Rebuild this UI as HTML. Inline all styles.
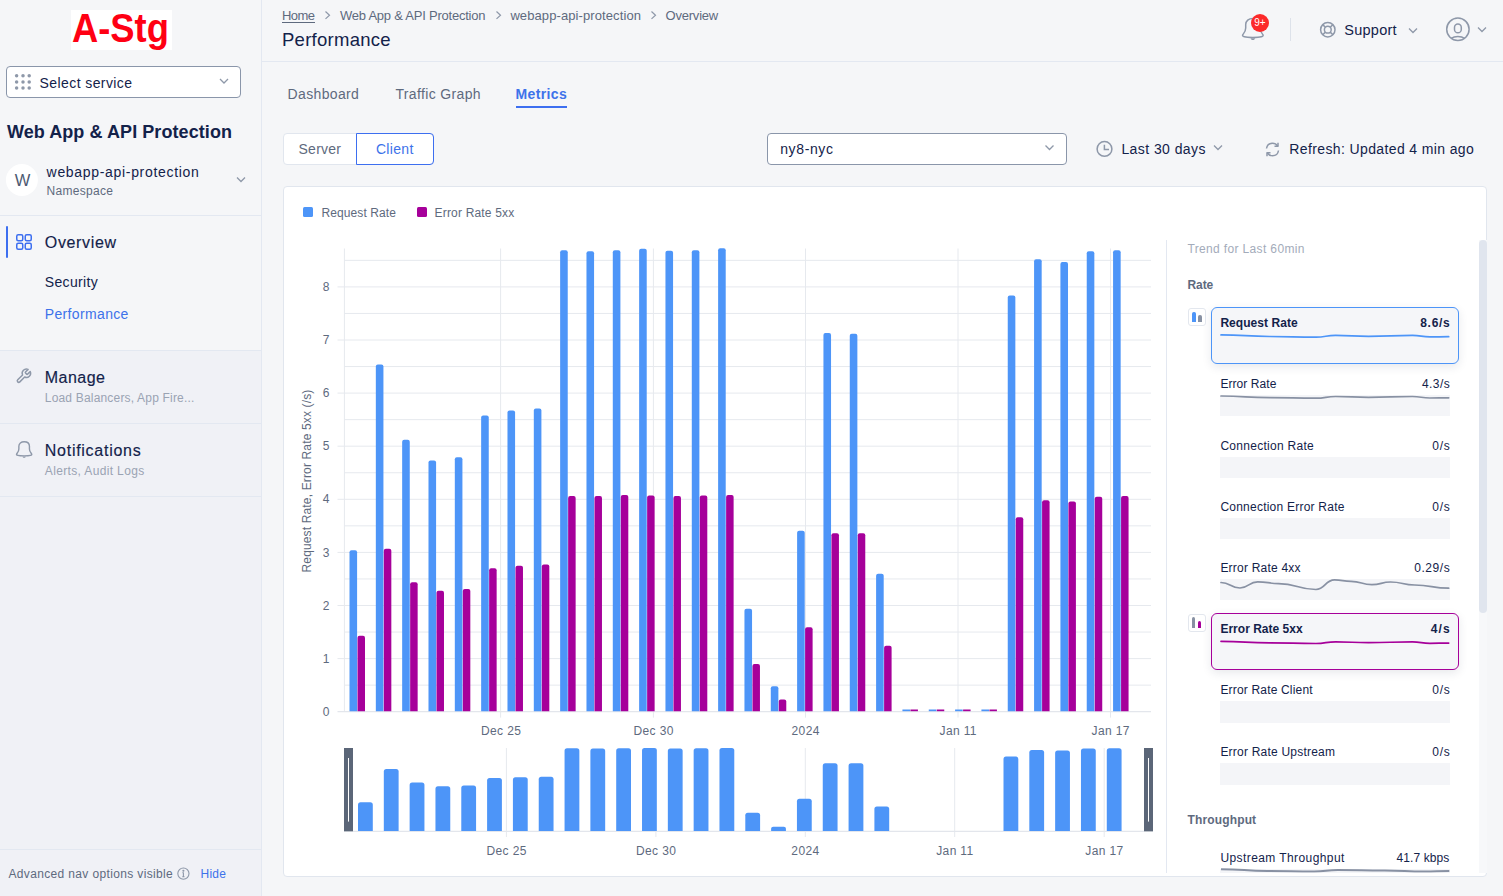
<!DOCTYPE html>
<html><head><meta charset="utf-8"><style>
html,body{margin:0;padding:0;width:1503px;height:896px;overflow:hidden;background:#f5f6f8;font-family:"Liberation Sans", sans-serif;}
.t{position:absolute;white-space:nowrap;}
svg{display:block;}
</style></head><body>
<div style="position:absolute;left:0px;top:0px;width:261px;height:896px;background:#f5f6f8;"></div>
<div style="position:absolute;left:0px;top:351px;width:261px;height:545px;background:#f0f1f6;"></div>
<div style="position:absolute;left:261px;top:0px;width:1px;height:896px;background:#e3e8f1;"></div>
<div style="position:absolute;left:262px;top:0px;width:1241px;height:896px;background:#f5f6f8;"></div>
<div style="position:absolute;left:262px;top:61px;width:1241px;height:1px;background:#e3e8f1;"></div>
<div style="position:absolute;left:70.6px;top:10px;width:101.4px;height:40px;background:#fff;"></div>
<div class="t" style="left:71.70px;top:8.13px;font-size:40px;line-height:40px;color:#ff0013;font-weight:bold;transform:scaleX(0.9087);transform-origin:0 0;">A-Stg</div>
<div style="position:absolute;left:6px;top:66px;width:235px;height:32px;background:#fff;border:1px solid #8a96aa;border-radius:4px;box-sizing:border-box;"></div>
<svg style="position:absolute;left:0;top:0" width="261" height="120"><circle cx="16.6" cy="75.8" r="1.75" fill="#8e98a9"/><circle cx="16.6" cy="82" r="1.75" fill="#8e98a9"/><circle cx="16.6" cy="88.1" r="1.75" fill="#8e98a9"/><circle cx="23" cy="75.8" r="1.75" fill="#8e98a9"/><circle cx="23" cy="82" r="1.75" fill="#8e98a9"/><circle cx="23" cy="88.1" r="1.75" fill="#8e98a9"/><circle cx="29.2" cy="75.8" r="1.75" fill="#8e98a9"/><circle cx="29.2" cy="82" r="1.75" fill="#8e98a9"/><circle cx="29.2" cy="88.1" r="1.75" fill="#8e98a9"/><path d="M220 79 L224 83 L228 79" fill="none" stroke="#8e98a9" stroke-width="1.3"/></svg>
<div class="t" style="left:39.60px;top:75.65px;font-size:14px;line-height:14px;color:#13224a;letter-spacing:0.405px;">Select service</div>
<div class="t" style="left:6.90px;top:123.46px;font-size:18px;line-height:18px;color:#13224a;font-weight:bold;letter-spacing:0.076px;">Web App &amp; API Protection</div>
<svg style="position:absolute;left:0;top:160" width="261" height="40"><circle cx="21.9" cy="20" r="16" fill="#fff"/><path d="M237 17.5 L241 21.5 L245 17.5" fill="none" stroke="#8e98a9" stroke-width="1.3"/></svg>
<div class="t" style="left:14.80px;top:172.03px;font-size:16.5px;line-height:16.5px;color:#4d5a72;">W</div>
<div class="t" style="left:46.60px;top:165.35px;font-size:14px;line-height:14px;color:#13224a;letter-spacing:0.682px;">webapp-api-protection</div>
<div class="t" style="left:46.60px;top:185.04px;font-size:12px;line-height:12px;color:#5e6a7e;letter-spacing:0.296px;">Namespace</div>
<div style="position:absolute;left:0px;top:215px;width:261px;height:1px;background:#e3e8f1;"></div>
<div style="position:absolute;left:6px;top:225.5px;width:2px;height:32.3px;background:#3d6ff0;border-radius:1px;"></div>
<svg style="position:absolute;left:16;top:234px;left:16px" width="17" height="17" fill="none" stroke="#3d6ff0" stroke-width="1.5"><rect x="0.75" y="0.75" width="6" height="6" rx="1.5"/><rect x="9.25" y="0.75" width="6" height="6" rx="1.5"/><rect x="0.75" y="9.25" width="6" height="6" rx="1.5"/><rect x="9.25" y="9.25" width="6" height="6" rx="1.5"/></svg>
<div class="t" style="left:44.80px;top:234.95px;font-size:16px;line-height:16px;color:#13224a;letter-spacing:0.654px;-webkit-text-stroke:0.15px currentColor;">Overview</div>
<div class="t" style="left:44.80px;top:275.15px;font-size:14px;line-height:14px;color:#13224a;letter-spacing:0.332px;">Security</div>
<div class="t" style="left:44.80px;top:307.05px;font-size:14px;line-height:14px;color:#3d72ea;letter-spacing:0.346px;">Performance</div>
<div style="position:absolute;left:0px;top:350px;width:261px;height:1px;background:#e3e8f1;"></div>
<svg style="position:absolute;left:0px;top:0px" width="60" height="500" fill="none" stroke="#8e98a9" stroke-linejoin="round" stroke-linecap="round"><g transform="translate(15.2,367.6) scale(0.7)" stroke-width="2.1"><path d="M14.7 6.3a1 1 0 0 0 0 1.4l1.6 1.6a1 1 0 0 0 1.4 0l3.77-3.77a6 6 0 0 1-7.94 7.94l-6.91 6.91a2.12 2.12 0 0 1-3-3l6.91-6.91a6 6 0 0 1 7.94-7.94l-3.76 3.76z"/></g><g transform="translate(13.16,437.06) scale(0.74)" stroke-width="1.9"><path d="M4.8 22.6 C3.5 24.5 7 25.4 14.85 25.4 C22.7 25.4 26.2 24.5 24.9 22.6 C23.5 20.8 22 19.5 22 16 L22 12.5 C22 8.8 19 6.4 14.85 6.4 C10.7 6.4 7.7 8.8 7.7 12.5 L7.7 16 C7.7 19.5 6.2 20.8 4.8 22.6 Z"/><path d="M12.6 26.2 C12.8 27.4 13.6 28 14.85 28 C16.1 28 16.9 27.4 17.1 26.2 Z" fill="#8e98a9" stroke="none"/></g></svg>
<div class="t" style="left:44.80px;top:370.25px;font-size:16px;line-height:16px;color:#13224a;letter-spacing:0.454px;-webkit-text-stroke:0.15px currentColor;">Manage</div>
<div class="t" style="left:44.80px;top:391.64px;font-size:12px;line-height:12px;color:#9aa3b3;letter-spacing:0.183px;">Load Balancers, App Fire...</div>
<div style="position:absolute;left:0px;top:423px;width:261px;height:1px;background:#e3e8f1;"></div>
<div class="t" style="left:44.80px;top:442.95px;font-size:16px;line-height:16px;color:#13224a;letter-spacing:0.729px;-webkit-text-stroke:0.15px currentColor;">Notifications</div>
<div class="t" style="left:44.80px;top:464.64px;font-size:12px;line-height:12px;color:#9aa3b3;letter-spacing:0.353px;">Alerts, Audit Logs</div>
<div style="position:absolute;left:0px;top:496px;width:261px;height:1px;background:#e3e8f1;"></div>
<div style="position:absolute;left:0px;top:849px;width:261px;height:1px;background:#e3e8f1;"></div>
<div class="t" style="left:8.40px;top:867.64px;font-size:12px;line-height:12px;color:#5e6a7e;letter-spacing:0.357px;">Advanced nav options visible</div>
<svg style="position:absolute;left:176px;top:866px" width="15" height="15" fill="none" stroke="#8e98a9" stroke-width="1.1"><circle cx="7.4" cy="7.6" r="5.6"/><path d="M7.4 6.6 V10.6 M6.4 10.6 H8.4 M6.5 6.6 H7.4"/><circle cx="7.4" cy="4.7" r="0.5" fill="#8e98a9"/></svg>
<div class="t" style="left:200.60px;top:867.64px;font-size:12px;line-height:12px;color:#3d72ea;letter-spacing:0.204px;">Hide</div>
<div class="t" style="left:282.00px;top:8.99px;font-size:13px;line-height:13px;color:#5e6a7e;letter-spacing:-0.557px;">Home</div>
<div style="position:absolute;left:282px;top:21.6px;width:33px;height:1px;background:#5e6a7e;"></div>
<svg style="position:absolute;left:324px;top:10.2px" width="8" height="11" fill="none" stroke="#8e98a9" stroke-width="1.2"><path d="M1.5 1.5 L5.5 5.2 L1.5 8.9"/></svg>
<div class="t" style="left:339.90px;top:8.99px;font-size:13px;line-height:13px;color:#5e6a7e;letter-spacing:-0.226px;">Web App &amp; API Protection</div>
<svg style="position:absolute;left:494.7px;top:10.2px" width="8" height="11" fill="none" stroke="#8e98a9" stroke-width="1.2"><path d="M1.5 1.5 L5.5 5.2 L1.5 8.9"/></svg>
<div class="t" style="left:510.40px;top:8.99px;font-size:13px;line-height:13px;color:#5e6a7e;letter-spacing:0.096px;">webapp-api-protection</div>
<svg style="position:absolute;left:649.9px;top:10.2px" width="8" height="11" fill="none" stroke="#8e98a9" stroke-width="1.2"><path d="M1.5 1.5 L5.5 5.2 L1.5 8.9"/></svg>
<div class="t" style="left:665.50px;top:8.99px;font-size:13px;line-height:13px;color:#5e6a7e;letter-spacing:-0.203px;">Overview</div>
<div class="t" style="left:282.00px;top:30.64px;font-size:18.5px;line-height:18.5px;color:#13224a;letter-spacing:0.269px;">Performance</div>
<svg style="position:absolute;left:1238px;top:12px" width="30" height="32" fill="none" stroke="#8e98a9" stroke-width="1.5" stroke-linejoin="round"><path d="M4.8 22.6 C3.5 24.5 7 25.4 14.85 25.4 C22.7 25.4 26.2 24.5 24.9 22.6 C23.5 20.8 22 19.5 22 16 L22 12.5 C22 8.8 19 6.4 14.85 6.4 C10.7 6.4 7.7 8.8 7.7 12.5 L7.7 16 C7.7 19.5 6.2 20.8 4.8 22.6 Z"/><path d="M12.6 26.2 C12.8 27.4 13.6 28 14.85 28 C16.1 28 16.9 27.4 17.1 26.2 Z" fill="#8e98a9" stroke="none"/></svg>
<div style="position:absolute;left:1250.9px;top:13.9px;width:18px;height:18px;border-radius:9px;background:#fc2a2a;"></div>
<div class="t" style="left:1254.20px;top:17.53px;font-size:10px;line-height:10px;color:#ffffff;">9+</div>
<div style="position:absolute;left:1289.5px;top:18px;width:1px;height:23px;background:#dde2ea;"></div>
<svg style="position:absolute;left:1318px;top:20px" width="20" height="20" fill="none" stroke="#8e98a9" stroke-width="1.5"><circle cx="9.8" cy="9.7" r="7.2"/><circle cx="9.8" cy="9.7" r="3.4"/><path d="M4.7 4.6 L7.4 7.3 M14.9 4.6 L12.2 7.3 M4.7 14.8 L7.4 12.1 M14.9 14.8 L12.2 12.1"/></svg>
<div class="t" style="left:1344.20px;top:23.02px;font-size:14.5px;line-height:14.5px;color:#13224a;letter-spacing:0.270px;">Support</div>
<svg style="position:absolute;left:1407px;top:27px" width="12" height="8" fill="none" stroke="#8e98a9" stroke-width="1.3"><path d="M2 1.5 L6 5.5 L10 1.5"/></svg>
<svg style="position:absolute;left:1444px;top:15px" width="28" height="28" fill="none" stroke="#8e98a9" stroke-width="1.5"><circle cx="13.9" cy="14.3" r="11.2"/><rect x="10.5" y="9" width="6.8" height="8.8" rx="3.4"/><path d="M7.3 23.3 C9.3 21.7 11.4 21.4 13.9 21.4 C16.4 21.4 18.5 21.7 20.5 23.3"/></svg>
<svg style="position:absolute;left:1476px;top:26px" width="12" height="8" fill="none" stroke="#8e98a9" stroke-width="1.3"><path d="M2 1.5 L6 5.5 L10 1.5"/></svg>
<div class="t" style="left:287.60px;top:87.15px;font-size:14px;line-height:14px;color:#5e6a7e;letter-spacing:0.339px;">Dashboard</div>
<div class="t" style="left:395.40px;top:87.15px;font-size:14px;line-height:14px;color:#5e6a7e;letter-spacing:0.357px;">Traffic Graph</div>
<div class="t" style="left:515.50px;top:87.15px;font-size:14px;line-height:14px;color:#3d72ea;font-weight:bold;letter-spacing:0.381px;">Metrics</div>
<div style="position:absolute;left:515.5px;top:105.5px;width:51.3px;height:2px;background:#3d6ff0;"></div>
<div style="position:absolute;left:282.5px;top:133px;width:151px;height:32px;background:#fff;border:1px solid #e1e6ee;border-radius:4px;box-sizing:border-box;"></div>
<div style="position:absolute;left:356px;top:133px;width:77.5px;height:32px;border:1px solid #3d6ff0;border-radius:0 4px 4px 0;box-sizing:border-box;"></div>
<div class="t" style="left:298.50px;top:142.35px;font-size:14px;line-height:14px;color:#5e6a7e;letter-spacing:0.253px;">Server</div>
<div class="t" style="left:375.90px;top:142.35px;font-size:14px;line-height:14px;color:#3d72ea;letter-spacing:0.341px;">Client</div>
<div style="position:absolute;left:767px;top:133px;width:300px;height:32px;background:#fff;border:1px solid #8a96aa;border-radius:4px;box-sizing:border-box;"></div>
<div class="t" style="left:780.20px;top:141.85px;font-size:14px;line-height:14px;color:#13224a;letter-spacing:0.631px;">ny8-nyc</div>
<svg style="position:absolute;left:1043px;top:144px" width="13" height="8" fill="none" stroke="#8e98a9" stroke-width="1.3"><path d="M2.5 1.5 L6.5 5.5 L10.5 1.5"/></svg>
<svg style="position:absolute;left:1095px;top:140px" width="19" height="19" fill="none" stroke="#8e98a9" stroke-width="1.5"><circle cx="9.5" cy="8.9" r="7.4"/><path d="M9.4 4.8 V9.4 H14"/></svg>
<div class="t" style="left:1121.40px;top:141.85px;font-size:14px;line-height:14px;color:#13224a;letter-spacing:0.428px;">Last 30 days</div>
<svg style="position:absolute;left:1212px;top:144px" width="12" height="8" fill="none" stroke="#8e98a9" stroke-width="1.3"><path d="M2 1.5 L6 5.5 L10 1.5"/></svg>
<svg style="position:absolute;left:1263px;top:140px" width="19" height="19" fill="none" stroke="#8e98a9" stroke-width="1.5" stroke-linejoin="round"><path d="M3.5 8.5 C4 5.3 6.5 3.2 9.5 3.2 C11.7 3.2 13.5 4.3 14.6 6 M15.5 10.5 C15 13.7 12.5 15.8 9.5 15.8 C7.3 15.8 5.5 14.7 4.4 13"/><path d="M15 2.8 V6.3 H11.5 M4 16.2 V12.7 H7.5"/></svg>
<div class="t" style="left:1289.30px;top:141.85px;font-size:14px;line-height:14px;color:#13224a;letter-spacing:0.376px;">Refresh: Updated 4 min ago</div>
<div style="position:absolute;left:282.5px;top:185.5px;width:1204px;height:691.5px;background:#fff;border:1px solid #e1e6ee;border-radius:4px;box-sizing:border-box;"></div>
<div style="position:absolute;left:303px;top:207px;width:10px;height:10px;background:#4d95f8;border-radius:1.5px;"></div>
<div class="t" style="left:321.40px;top:206.74px;font-size:12px;line-height:12px;color:#5e6a7e;letter-spacing:0.111px;">Request Rate</div>
<div style="position:absolute;left:417px;top:207px;width:10px;height:10px;background:#a6009a;border-radius:1.5px;"></div>
<div class="t" style="left:434.60px;top:206.74px;font-size:12px;line-height:12px;color:#5e6a7e;letter-spacing:0.172px;">Error Rate 5xx</div>
<svg style="position:absolute;left:0;top:0" width="1503" height="896"><line x1="344.4" y1="685.15" x2="1151" y2="685.15" stroke="#e6e9ee" stroke-width="1"/><line x1="337.5" y1="658.60" x2="1151" y2="658.60" stroke="#e6e9ee" stroke-width="1"/><line x1="344.4" y1="632.05" x2="1151" y2="632.05" stroke="#e6e9ee" stroke-width="1"/><line x1="337.5" y1="605.50" x2="1151" y2="605.50" stroke="#e6e9ee" stroke-width="1"/><line x1="344.4" y1="578.95" x2="1151" y2="578.95" stroke="#e6e9ee" stroke-width="1"/><line x1="337.5" y1="552.40" x2="1151" y2="552.40" stroke="#e6e9ee" stroke-width="1"/><line x1="344.4" y1="525.85" x2="1151" y2="525.85" stroke="#e6e9ee" stroke-width="1"/><line x1="337.5" y1="499.30" x2="1151" y2="499.30" stroke="#e6e9ee" stroke-width="1"/><line x1="344.4" y1="472.75" x2="1151" y2="472.75" stroke="#e6e9ee" stroke-width="1"/><line x1="337.5" y1="446.20" x2="1151" y2="446.20" stroke="#e6e9ee" stroke-width="1"/><line x1="344.4" y1="419.65" x2="1151" y2="419.65" stroke="#e6e9ee" stroke-width="1"/><line x1="337.5" y1="393.10" x2="1151" y2="393.10" stroke="#e6e9ee" stroke-width="1"/><line x1="344.4" y1="366.55" x2="1151" y2="366.55" stroke="#e6e9ee" stroke-width="1"/><line x1="337.5" y1="340.00" x2="1151" y2="340.00" stroke="#e6e9ee" stroke-width="1"/><line x1="344.4" y1="313.45" x2="1151" y2="313.45" stroke="#e6e9ee" stroke-width="1"/><line x1="337.5" y1="286.90" x2="1151" y2="286.90" stroke="#e6e9ee" stroke-width="1"/><line x1="344.4" y1="260.35" x2="1151" y2="260.35" stroke="#e6e9ee" stroke-width="1"/><line x1="500.6" y1="248.5" x2="500.6" y2="717.6" stroke="#e6e9ee" stroke-width="1"/><line x1="653.4" y1="248.5" x2="653.4" y2="717.6" stroke="#e6e9ee" stroke-width="1"/><line x1="805.5" y1="248.5" x2="805.5" y2="717.6" stroke="#e6e9ee" stroke-width="1"/><line x1="958" y1="248.5" x2="958" y2="717.6" stroke="#e6e9ee" stroke-width="1"/><line x1="1110.5" y1="248.5" x2="1110.5" y2="717.6" stroke="#e6e9ee" stroke-width="1"/><line x1="344.4" y1="248.5" x2="344.4" y2="711.7" stroke="#e6e9ee" stroke-width="1"/><line x1="337.5" y1="711.7" x2="1151" y2="711.7" stroke="#e3e6ec" stroke-width="1.2"/><path d="M349.50 711.20 V552.28 Q349.50 550.28 351.50 550.28 H355.10 Q357.10 550.28 357.10 552.28 V711.20 Z" fill="#4d95f8"/><path d="M357.50 711.20 V637.77 Q357.50 635.77 359.50 635.77 H363.00 Q365.00 635.77 365.00 637.77 V711.20 Z" fill="#a6009a"/><path d="M375.83 711.20 V366.43 Q375.83 364.43 377.83 364.43 H381.43 Q383.43 364.43 383.43 366.43 V711.20 Z" fill="#4d95f8"/><path d="M383.83 711.20 V550.68 Q383.83 548.68 385.83 548.68 H389.33 Q391.33 548.68 391.33 550.68 V711.20 Z" fill="#a6009a"/><path d="M402.16 711.20 V441.83 Q402.16 439.83 404.16 439.83 H407.76 Q409.76 439.83 409.76 441.83 V711.20 Z" fill="#4d95f8"/><path d="M410.16 711.20 V584.14 Q410.16 582.14 412.16 582.14 H415.66 Q417.66 582.14 417.66 584.14 V711.20 Z" fill="#a6009a"/><path d="M428.49 711.20 V462.54 Q428.49 460.54 430.49 460.54 H434.09 Q436.09 460.54 436.09 462.54 V711.20 Z" fill="#4d95f8"/><path d="M436.49 711.20 V592.63 Q436.49 590.63 438.49 590.63 H441.99 Q443.99 590.63 443.99 592.63 V711.20 Z" fill="#a6009a"/><path d="M454.82 711.20 V459.35 Q454.82 457.35 456.82 457.35 H460.42 Q462.42 457.35 462.42 459.35 V711.20 Z" fill="#4d95f8"/><path d="M462.82 711.20 V591.04 Q462.82 589.04 464.82 589.04 H468.32 Q470.32 589.04 470.32 591.04 V711.20 Z" fill="#a6009a"/><path d="M481.15 711.20 V417.40 Q481.15 415.40 483.15 415.40 H486.75 Q488.75 415.40 488.75 417.40 V711.20 Z" fill="#4d95f8"/><path d="M489.15 711.20 V570.33 Q489.15 568.33 491.15 568.33 H494.65 Q496.65 568.33 496.65 570.33 V711.20 Z" fill="#a6009a"/><path d="M507.48 711.20 V412.62 Q507.48 410.62 509.48 410.62 H513.08 Q515.08 410.62 515.08 412.62 V711.20 Z" fill="#4d95f8"/><path d="M515.48 711.20 V567.68 Q515.48 565.68 517.48 565.68 H520.98 Q522.98 565.68 522.98 567.68 V711.20 Z" fill="#a6009a"/><path d="M533.81 711.20 V410.50 Q533.81 408.50 535.81 408.50 H539.41 Q541.41 408.50 541.41 410.50 V711.20 Z" fill="#4d95f8"/><path d="M541.81 711.20 V566.61 Q541.81 564.61 543.81 564.61 H547.31 Q549.31 564.61 549.31 566.61 V711.20 Z" fill="#a6009a"/><path d="M560.14 711.20 V252.26 Q560.14 250.26 562.14 250.26 H565.74 Q567.74 250.26 567.74 252.26 V711.20 Z" fill="#4d95f8"/><path d="M568.14 711.20 V498.11 Q568.14 496.11 570.14 496.11 H573.64 Q575.64 496.11 575.64 498.11 V711.20 Z" fill="#a6009a"/><path d="M586.47 711.20 V253.32 Q586.47 251.32 588.47 251.32 H592.07 Q594.07 251.32 594.07 253.32 V711.20 Z" fill="#4d95f8"/><path d="M594.47 711.20 V498.11 Q594.47 496.11 596.47 496.11 H599.97 Q601.97 496.11 601.97 498.11 V711.20 Z" fill="#a6009a"/><path d="M612.80 711.20 V252.26 Q612.80 250.26 614.80 250.26 H618.40 Q620.40 250.26 620.40 252.26 V711.20 Z" fill="#4d95f8"/><path d="M620.80 711.20 V497.05 Q620.80 495.05 622.80 495.05 H626.30 Q628.30 495.05 628.30 497.05 V711.20 Z" fill="#a6009a"/><path d="M639.13 711.20 V250.67 Q639.13 248.67 641.13 248.67 H644.73 Q646.73 248.67 646.73 250.67 V711.20 Z" fill="#4d95f8"/><path d="M647.13 711.20 V497.58 Q647.13 495.58 649.13 495.58 H652.63 Q654.63 495.58 654.63 497.58 V711.20 Z" fill="#a6009a"/><path d="M665.46 711.20 V252.79 Q665.46 250.79 667.46 250.79 H671.06 Q673.06 250.79 673.06 252.79 V711.20 Z" fill="#4d95f8"/><path d="M673.46 711.20 V498.11 Q673.46 496.11 675.46 496.11 H678.96 Q680.96 496.11 680.96 498.11 V711.20 Z" fill="#a6009a"/><path d="M691.79 711.20 V252.26 Q691.79 250.26 693.79 250.26 H697.39 Q699.39 250.26 699.39 252.26 V711.20 Z" fill="#4d95f8"/><path d="M699.79 711.20 V497.58 Q699.79 495.58 701.79 495.58 H705.29 Q707.29 495.58 707.29 497.58 V711.20 Z" fill="#a6009a"/><path d="M718.12 711.20 V250.14 Q718.12 248.14 720.12 248.14 H723.72 Q725.72 248.14 725.72 250.14 V711.20 Z" fill="#4d95f8"/><path d="M726.12 711.20 V497.05 Q726.12 495.05 728.12 495.05 H731.62 Q733.62 495.05 733.62 497.05 V711.20 Z" fill="#a6009a"/><path d="M744.45 711.20 V610.69 Q744.45 608.69 746.45 608.69 H750.05 Q752.05 608.69 752.05 610.69 V711.20 Z" fill="#4d95f8"/><path d="M752.45 711.20 V665.91 Q752.45 663.91 754.45 663.91 H757.95 Q759.95 663.91 759.95 665.91 V711.20 Z" fill="#a6009a"/><path d="M770.78 711.20 V688.21 Q770.78 686.21 772.78 686.21 H776.38 Q778.38 686.21 778.38 688.21 V711.20 Z" fill="#4d95f8"/><path d="M778.78 711.20 V701.49 Q778.78 699.49 780.78 699.49 H784.28 Q786.28 699.49 786.28 701.49 V711.20 Z" fill="#a6009a"/><path d="M797.11 711.20 V532.63 Q797.11 530.63 799.11 530.63 H802.71 Q804.71 530.63 804.71 532.63 V711.20 Z" fill="#4d95f8"/><path d="M805.11 711.20 V629.27 Q805.11 627.27 807.11 627.27 H810.61 Q812.61 627.27 812.61 629.27 V711.20 Z" fill="#a6009a"/><path d="M823.44 711.20 V335.10 Q823.44 333.10 825.44 333.10 H829.04 Q831.04 333.10 831.04 335.10 V711.20 Z" fill="#4d95f8"/><path d="M831.44 711.20 V535.28 Q831.44 533.28 833.44 533.28 H836.94 Q838.94 533.28 838.94 535.28 V711.20 Z" fill="#a6009a"/><path d="M849.77 711.20 V335.63 Q849.77 333.63 851.77 333.63 H855.37 Q857.37 333.63 857.37 335.63 V711.20 Z" fill="#4d95f8"/><path d="M857.77 711.20 V535.28 Q857.77 533.28 859.77 533.28 H863.27 Q865.27 533.28 865.27 535.28 V711.20 Z" fill="#a6009a"/><path d="M876.10 711.20 V575.64 Q876.10 573.64 878.10 573.64 H881.70 Q883.70 573.64 883.70 575.64 V711.20 Z" fill="#4d95f8"/><path d="M884.10 711.20 V647.86 Q884.10 645.86 886.10 645.86 H889.60 Q891.60 645.86 891.60 647.86 V711.20 Z" fill="#a6009a"/><rect x="902.43" y="709.50" width="7.60" height="1.70" fill="#4d95f8"/><rect x="910.43" y="709.50" width="7.50" height="1.70" fill="#a6009a"/><rect x="928.76" y="709.50" width="7.60" height="1.70" fill="#4d95f8"/><rect x="936.76" y="709.50" width="7.50" height="1.70" fill="#a6009a"/><rect x="955.09" y="709.50" width="7.60" height="1.70" fill="#4d95f8"/><rect x="963.09" y="709.50" width="7.50" height="1.70" fill="#a6009a"/><rect x="981.42" y="709.50" width="7.60" height="1.70" fill="#4d95f8"/><rect x="989.42" y="709.50" width="7.50" height="1.70" fill="#a6009a"/><path d="M1007.75 711.20 V297.40 Q1007.75 295.40 1009.75 295.40 H1013.35 Q1015.35 295.40 1015.35 297.40 V711.20 Z" fill="#4d95f8"/><path d="M1015.75 711.20 V519.35 Q1015.75 517.35 1017.75 517.35 H1021.25 Q1023.25 517.35 1023.25 519.35 V711.20 Z" fill="#a6009a"/><path d="M1034.08 711.20 V261.29 Q1034.08 259.29 1036.08 259.29 H1039.68 Q1041.68 259.29 1041.68 261.29 V711.20 Z" fill="#4d95f8"/><path d="M1042.08 711.20 V502.36 Q1042.08 500.36 1044.08 500.36 H1047.58 Q1049.58 500.36 1049.58 502.36 V711.20 Z" fill="#a6009a"/><path d="M1060.41 711.20 V263.94 Q1060.41 261.94 1062.41 261.94 H1066.01 Q1068.01 261.94 1068.01 263.94 V711.20 Z" fill="#4d95f8"/><path d="M1068.41 711.20 V503.42 Q1068.41 501.42 1070.41 501.42 H1073.91 Q1075.91 501.42 1075.91 503.42 V711.20 Z" fill="#a6009a"/><path d="M1086.74 711.20 V253.32 Q1086.74 251.32 1088.74 251.32 H1092.34 Q1094.34 251.32 1094.34 253.32 V711.20 Z" fill="#4d95f8"/><path d="M1094.74 711.20 V498.65 Q1094.74 496.65 1096.74 496.65 H1100.24 Q1102.24 496.65 1102.24 498.65 V711.20 Z" fill="#a6009a"/><path d="M1113.07 711.20 V252.26 Q1113.07 250.26 1115.07 250.26 H1118.67 Q1120.67 250.26 1120.67 252.26 V711.20 Z" fill="#4d95f8"/><path d="M1121.07 711.20 V498.11 Q1121.07 496.11 1123.07 496.11 H1126.57 Q1128.57 496.11 1128.57 498.11 V711.20 Z" fill="#a6009a"/><line x1="506.4" y1="748" x2="506.4" y2="837" stroke="#e6e9ee" stroke-width="1"/><line x1="655.9" y1="748" x2="655.9" y2="837" stroke="#e6e9ee" stroke-width="1"/><line x1="805.3" y1="748" x2="805.3" y2="837" stroke="#e6e9ee" stroke-width="1"/><line x1="954.7" y1="748" x2="954.7" y2="837" stroke="#e6e9ee" stroke-width="1"/><line x1="1104.2" y1="748" x2="1104.2" y2="837" stroke="#e6e9ee" stroke-width="1"/><line x1="353" y1="831.4" x2="1144" y2="831.4" stroke="#e3e6ec" stroke-width="1.2"/><path d="M358.00 830.90 V804.84 Q358.00 802.34 360.50 802.34 H370.30 Q372.80 802.34 372.80 804.84 V830.90 Z" fill="#4d95f8"/><path d="M383.82 830.90 V771.38 Q383.82 768.88 386.32 768.88 H396.12 Q398.62 768.88 398.62 771.38 V830.90 Z" fill="#4d95f8"/><path d="M409.64 830.90 V784.95 Q409.64 782.45 412.14 782.45 H421.94 Q424.44 782.45 424.44 784.95 V830.90 Z" fill="#4d95f8"/><path d="M435.46 830.90 V788.68 Q435.46 786.18 437.96 786.18 H447.76 Q450.26 786.18 450.26 788.68 V830.90 Z" fill="#4d95f8"/><path d="M461.28 830.90 V788.11 Q461.28 785.61 463.78 785.61 H473.58 Q476.08 785.61 476.08 788.11 V830.90 Z" fill="#4d95f8"/><path d="M487.10 830.90 V780.56 Q487.10 778.06 489.60 778.06 H499.40 Q501.90 778.06 501.90 780.56 V830.90 Z" fill="#4d95f8"/><path d="M512.92 830.90 V779.69 Q512.92 777.19 515.42 777.19 H525.22 Q527.72 777.19 527.72 779.69 V830.90 Z" fill="#4d95f8"/><path d="M538.74 830.90 V779.31 Q538.74 776.81 541.24 776.81 H551.04 Q553.54 776.81 553.54 779.31 V830.90 Z" fill="#4d95f8"/><path d="M564.56 830.90 V750.82 Q564.56 748.32 567.06 748.32 H576.86 Q579.36 748.32 579.36 750.82 V830.90 Z" fill="#4d95f8"/><path d="M590.38 830.90 V751.01 Q590.38 748.51 592.88 748.51 H602.68 Q605.18 748.51 605.18 751.01 V830.90 Z" fill="#4d95f8"/><path d="M616.20 830.90 V750.82 Q616.20 748.32 618.70 748.32 H628.50 Q631.00 748.32 631.00 750.82 V830.90 Z" fill="#4d95f8"/><path d="M642.02 830.90 V750.54 Q642.02 748.04 644.52 748.04 H654.32 Q656.82 748.04 656.82 750.54 V830.90 Z" fill="#4d95f8"/><path d="M667.84 830.90 V750.92 Q667.84 748.42 670.34 748.42 H680.14 Q682.64 748.42 682.64 750.92 V830.90 Z" fill="#4d95f8"/><path d="M693.66 830.90 V750.82 Q693.66 748.32 696.16 748.32 H705.96 Q708.46 748.32 708.46 750.82 V830.90 Z" fill="#4d95f8"/><path d="M719.48 830.90 V750.44 Q719.48 747.94 721.98 747.94 H731.78 Q734.28 747.94 734.28 750.44 V830.90 Z" fill="#4d95f8"/><path d="M745.30 830.90 V815.35 Q745.30 812.85 747.80 812.85 H757.60 Q760.10 812.85 760.10 815.35 V830.90 Z" fill="#4d95f8"/><path d="M771.12 830.90 V828.86 Q771.12 826.81 773.16 826.81 H783.88 Q785.92 826.81 785.92 828.86 V830.90 Z" fill="#4d95f8"/><path d="M796.94 830.90 V801.30 Q796.94 798.80 799.44 798.80 H809.24 Q811.74 798.80 811.74 801.30 V830.90 Z" fill="#4d95f8"/><path d="M822.76 830.90 V765.74 Q822.76 763.24 825.26 763.24 H835.06 Q837.56 763.24 837.56 765.74 V830.90 Z" fill="#4d95f8"/><path d="M848.58 830.90 V765.83 Q848.58 763.33 851.08 763.33 H860.88 Q863.38 763.33 863.38 765.83 V830.90 Z" fill="#4d95f8"/><path d="M874.40 830.90 V809.04 Q874.40 806.54 876.90 806.54 H886.70 Q889.20 806.54 889.20 809.04 V830.90 Z" fill="#4d95f8"/><path d="M1003.50 830.90 V758.95 Q1003.50 756.45 1006.00 756.45 H1015.80 Q1018.30 756.45 1018.30 758.95 V830.90 Z" fill="#4d95f8"/><path d="M1029.32 830.90 V752.45 Q1029.32 749.95 1031.82 749.95 H1041.62 Q1044.12 749.95 1044.12 752.45 V830.90 Z" fill="#4d95f8"/><path d="M1055.14 830.90 V752.93 Q1055.14 750.43 1057.64 750.43 H1067.44 Q1069.94 750.43 1069.94 752.93 V830.90 Z" fill="#4d95f8"/><path d="M1080.96 830.90 V751.01 Q1080.96 748.51 1083.46 748.51 H1093.26 Q1095.76 748.51 1095.76 751.01 V830.90 Z" fill="#4d95f8"/><path d="M1106.78 830.90 V750.82 Q1106.78 748.32 1109.28 748.32 H1119.08 Q1121.58 748.32 1121.58 750.82 V830.90 Z" fill="#4d95f8"/><rect x="344" y="748" width="9" height="83.4" fill="#5b6678"/><rect x="348" y="758" width="1" height="63.6" fill="#ffffff"/><rect x="1144" y="748" width="9" height="83.4" fill="#5b6678"/><rect x="1148" y="758" width="1" height="63.6" fill="#ffffff"/></svg>
<div class="t" style="left:322.73px;top:705.84px;font-size:12px;line-height:12px;color:#5e6a7e;">0</div>
<div class="t" style="left:322.73px;top:652.74px;font-size:12px;line-height:12px;color:#5e6a7e;">1</div>
<div class="t" style="left:322.73px;top:599.64px;font-size:12px;line-height:12px;color:#5e6a7e;">2</div>
<div class="t" style="left:322.73px;top:546.54px;font-size:12px;line-height:12px;color:#5e6a7e;">3</div>
<div class="t" style="left:322.73px;top:493.44px;font-size:12px;line-height:12px;color:#5e6a7e;">4</div>
<div class="t" style="left:322.73px;top:440.34px;font-size:12px;line-height:12px;color:#5e6a7e;">5</div>
<div class="t" style="left:322.73px;top:387.24px;font-size:12px;line-height:12px;color:#5e6a7e;">6</div>
<div class="t" style="left:322.73px;top:334.14px;font-size:12px;line-height:12px;color:#5e6a7e;">7</div>
<div class="t" style="left:322.73px;top:281.04px;font-size:12px;line-height:12px;color:#5e6a7e;">8</div>
<div class="t" style="left:480.94px;top:725.04px;font-size:12px;line-height:12px;color:#5e6a7e;letter-spacing:0.380px;">Dec 25</div>
<div class="t" style="left:633.44px;top:725.04px;font-size:12px;line-height:12px;color:#5e6a7e;letter-spacing:0.380px;">Dec 30</div>
<div class="t" style="left:791.48px;top:725.04px;font-size:12px;line-height:12px;color:#5e6a7e;letter-spacing:0.445px;">2024</div>
<div class="t" style="left:939.55px;top:725.04px;font-size:12px;line-height:12px;color:#5e6a7e;letter-spacing:0.351px;">Jan 11</div>
<div class="t" style="left:1091.58px;top:725.04px;font-size:12px;line-height:12px;color:#5e6a7e;letter-spacing:0.360px;">Jan 17</div>
<div class="t" style="left:486.44px;top:844.84px;font-size:12px;line-height:12px;color:#5e6a7e;letter-spacing:0.380px;">Dec 25</div>
<div class="t" style="left:635.94px;top:844.84px;font-size:12px;line-height:12px;color:#5e6a7e;letter-spacing:0.380px;">Dec 30</div>
<div class="t" style="left:791.28px;top:844.84px;font-size:12px;line-height:12px;color:#5e6a7e;letter-spacing:0.445px;">2024</div>
<div class="t" style="left:936.25px;top:844.84px;font-size:12px;line-height:12px;color:#5e6a7e;letter-spacing:0.351px;">Jan 11</div>
<div class="t" style="left:1085.28px;top:844.84px;font-size:12px;line-height:12px;color:#5e6a7e;letter-spacing:0.360px;">Jan 17</div>
<div class="t" style="left:307px;top:480.5px;font-size:12px;line-height:12px;color:#5e6a7e;transform:translate(-50%,-50%) rotate(-90deg);letter-spacing:0.15px;">Request Rate, Error Rate 5xx (/s)</div>
<div style="position:absolute;left:1166px;top:240px;width:1px;height:633px;background:#e3e8f1;"></div>
<div style="position:absolute;left:1479px;top:240px;width:8px;height:633px;background:#f7f8fa;"></div>
<div style="position:absolute;left:1479px;top:240px;width:8px;height:373px;background:#e0e5ee;border-radius:4px;"></div>
<div class="t" style="left:1187.40px;top:243.04px;font-size:12px;line-height:12px;color:#a3abba;letter-spacing:0.359px;">Trend for Last 60min</div>
<div class="t" style="left:1187.40px;top:279.14px;font-size:12px;line-height:12px;color:#5e6a7e;font-weight:bold;letter-spacing:-0.039px;">Rate</div>
<div style="position:absolute;left:1211.2px;top:307.3px;width:247.4px;height:56.7px;background:#f5f6f9;border:1.5px solid #4d95f8;border-radius:6px;box-sizing:border-box;box-shadow:0 3px 10px rgba(30,40,70,0.10);"></div>
<div style="position:absolute;left:1188px;top:308.0px;width:17.7px;height:17.5px;background:#fff;border:1px solid #e3e7ee;border-radius:3px;box-sizing:border-box;"></div>
<div style="position:absolute;left:1192.2px;top:311.70000000000005px;width:3.6px;height:10.8px;background:#4d95f8;border-radius:1.8px 1.8px 0 0;"></div>
<div style="position:absolute;left:1198px;top:314.6px;width:3.6px;height:7.9px;background:#8891a3;border-radius:1.8px 1.8px 0 0;"></div>
<div class="t" style="left:1220.40px;top:316.84px;font-size:12px;line-height:12px;color:#13224a;font-weight:bold;letter-spacing:0.047px;">Request Rate</div>
<div class="t" style="left:1420.20px;top:316.84px;font-size:12px;line-height:12px;color:#13224a;font-weight:bold;letter-spacing:0.728px;">8.6/s</div>
<div style="position:absolute;left:1220.4px;top:394.7px;width:229.4px;height:21.6px;background:#f4f5f8;"></div>
<div class="t" style="left:1220.40px;top:377.94px;font-size:12px;line-height:12px;color:#13224a;letter-spacing:0.073px;">Error Rate</div>
<div class="t" style="left:1421.90px;top:377.94px;font-size:12px;line-height:12px;color:#13224a;letter-spacing:0.471px;">4.3/s</div>
<div style="position:absolute;left:1220.4px;top:456.9px;width:229.4px;height:21.6px;background:#f4f5f8;"></div>
<div class="t" style="left:1220.40px;top:440.14px;font-size:12px;line-height:12px;color:#13224a;letter-spacing:0.279px;">Connection Rate</div>
<div class="t" style="left:1432.20px;top:440.14px;font-size:12px;line-height:12px;color:#13224a;letter-spacing:0.792px;">0/s</div>
<div style="position:absolute;left:1220.4px;top:517.7px;width:229.4px;height:21.6px;background:#f4f5f8;"></div>
<div class="t" style="left:1220.40px;top:500.94px;font-size:12px;line-height:12px;color:#13224a;letter-spacing:0.230px;">Connection Error Rate</div>
<div class="t" style="left:1432.20px;top:500.94px;font-size:12px;line-height:12px;color:#13224a;letter-spacing:0.792px;">0/s</div>
<div style="position:absolute;left:1220.4px;top:578.7px;width:229.4px;height:21.6px;background:#f4f5f8;"></div>
<div class="t" style="left:1220.40px;top:561.94px;font-size:12px;line-height:12px;color:#13224a;letter-spacing:0.211px;">Error Rate 4xx</div>
<div class="t" style="left:1414.20px;top:561.94px;font-size:12px;line-height:12px;color:#13224a;letter-spacing:0.583px;">0.29/s</div>
<div style="position:absolute;left:1211.2px;top:613.4000000000001px;width:247.4px;height:56.7px;background:#f5f6f9;border:1.5px solid #a6009a;border-radius:6px;box-sizing:border-box;box-shadow:0 3px 10px rgba(30,40,70,0.10);"></div>
<div style="position:absolute;left:1188px;top:614.1px;width:17.7px;height:17.5px;background:#fff;border:1px solid #e3e7ee;border-radius:3px;box-sizing:border-box;"></div>
<div style="position:absolute;left:1191.9px;top:617.3000000000001px;width:3.6px;height:10.9px;background:#8891a3;border-radius:1.8px 1.8px 0 0;"></div>
<div style="position:absolute;left:1197.9px;top:621.0px;width:3.6px;height:7.2px;background:#a6009a;border-radius:1.8px 1.8px 0 0;"></div>
<div class="t" style="left:1220.40px;top:622.94px;font-size:12px;line-height:12px;color:#13224a;font-weight:bold;letter-spacing:0.019px;">Error Rate 5xx</div>
<div class="t" style="left:1430.70px;top:622.94px;font-size:12px;line-height:12px;color:#13224a;font-weight:bold;letter-spacing:1.206px;">4/s</div>
<div style="position:absolute;left:1220.4px;top:701px;width:229.4px;height:21.6px;background:#f4f5f8;"></div>
<div class="t" style="left:1220.40px;top:684.24px;font-size:12px;line-height:12px;color:#13224a;letter-spacing:0.178px;">Error Rate Client</div>
<div class="t" style="left:1432.20px;top:684.24px;font-size:12px;line-height:12px;color:#13224a;letter-spacing:0.792px;">0/s</div>
<div style="position:absolute;left:1220.4px;top:763px;width:229.4px;height:21.6px;background:#f4f5f8;"></div>
<div class="t" style="left:1220.40px;top:746.24px;font-size:12px;line-height:12px;color:#13224a;letter-spacing:0.216px;">Error Rate Upstream</div>
<div class="t" style="left:1432.20px;top:746.24px;font-size:12px;line-height:12px;color:#13224a;letter-spacing:0.792px;">0/s</div>
<div class="t" style="left:1187.60px;top:814.04px;font-size:12px;line-height:12px;color:#5e6a7e;font-weight:bold;letter-spacing:0.132px;">Throughput</div>
<div class="t" style="left:1220.40px;top:851.74px;font-size:12px;line-height:12px;color:#13224a;letter-spacing:0.416px;">Upstream Throughput</div>
<div class="t" style="left:1396.50px;top:851.74px;font-size:12px;line-height:12px;color:#13224a;letter-spacing:0.096px;">41.7 kbps</div>
<div style="position:absolute;left:1220.4px;top:868.5px;width:229.4px;height:4.5px;background:#f4f5f8;"></div>
<svg style="position:absolute;left:0;top:0" width="1503" height="896"><defs><clipPath id="cp"><rect x="1166" y="240" width="320" height="632.7"/></clipPath></defs><g clip-path="url(#cp)"><path d="M1221 334.9 C1245.4 334.9 1245.4 336.5 1269.8 336.5 C1292.8 336.5 1292.8 337.1 1315.9 337.1 C1325.8 337.1 1325.8 335.4 1335.6 335.4 C1352.1 335.4 1352.1 336.3 1368.6 336.3 C1390.5 336.3 1390.5 335.4 1412.5 335.4 C1421.2 335.4 1421.2 336.9 1430.0 336.9 C1439.3 336.9 1439.3 336.7 1448.7 336.7" fill="none" stroke="#4d95f8" stroke-width="1.7" stroke-linecap="round"/><path d="M1221 395.99999999999994 C1245.4 396.0 1245.4 397.6 1269.8 397.6 C1292.8 397.6 1292.8 398.2 1315.9 398.2 C1325.8 398.2 1325.8 396.5 1335.6 396.5 C1352.1 396.5 1352.1 397.4 1368.6 397.4 C1390.5 397.4 1390.5 396.5 1412.5 396.5 C1421.2 396.5 1421.2 398.0 1430.0 398.0 C1439.3 398.0 1439.3 397.8 1448.7 397.8" fill="none" stroke="#8891a3" stroke-width="1.7" stroke-linecap="round"/><path d="M1221 582.5 C1230.5 582.5 1230.5 588.0 1240.0 588.0 C1248.8 588.0 1248.8 581.8 1257.7 581.8 C1268.1 581.8 1268.1 583.6 1278.5 583.6 C1297.2 583.6 1297.2 589.5 1315.9 589.5 C1325.2 589.5 1325.2 579.8 1334.5 579.8 C1342.8 579.8 1342.8 581.4 1351.0 581.4 C1361.5 581.4 1361.5 584.7 1371.9 584.7 C1381.2 584.7 1381.2 582.0 1390.5 582.0 C1402.6 582.0 1402.6 585.0 1414.7 585.0 C1431.7 585.0 1431.7 588.2 1448.7 588.2" fill="none" stroke="#8891a3" stroke-width="1.7" stroke-linecap="round"/><path d="M1221 641.3 C1245.4 641.3 1245.4 642.9 1269.8 642.9 C1292.8 642.9 1292.8 643.5 1315.9 643.5 C1325.8 643.5 1325.8 641.8 1335.6 641.8 C1352.1 641.8 1352.1 642.7 1368.6 642.7 C1390.5 642.7 1390.5 641.8 1412.5 641.8 C1421.2 641.8 1421.2 643.3 1430.0 643.3 C1439.3 643.3 1439.3 643.1 1448.7 643.1" fill="none" stroke="#a6009a" stroke-width="1.7" stroke-linecap="round"/><path d="M1221 869.2 C1244.2 869.2 1244.2 871.0 1267.4 871.0 C1290.8 871.0 1290.8 871.5 1314.3 871.5 C1326.0 871.5 1326.0 869.9 1337.8 869.9 C1361.2 869.9 1361.2 870.4 1384.7 870.4 C1404.7 870.4 1404.7 871.5 1424.6 871.5 C1436.9 871.5 1436.9 871.0 1449.3 871.0" fill="none" stroke="#8891a3" stroke-width="2"/></g></svg>
</body></html>
